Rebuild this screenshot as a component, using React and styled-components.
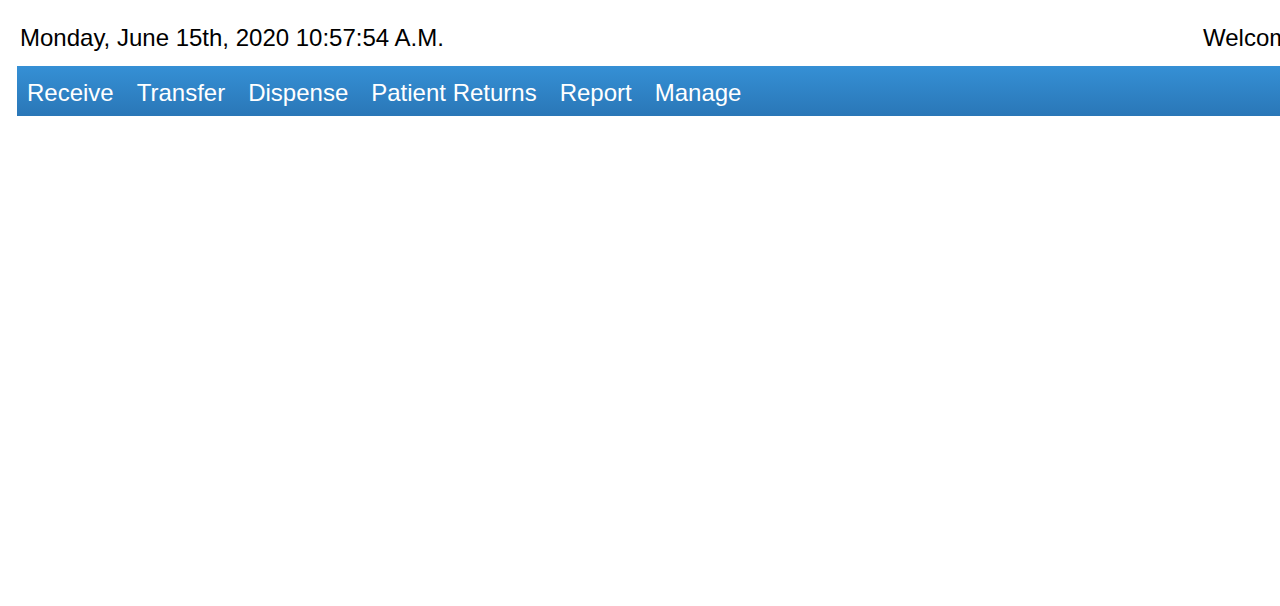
import React from 'react';
import styled, {createGlobalStyle} from 'styled-components';

const GlobalStyle = createGlobalStyle`
  html, body {
    margin: 0;
    padding: 0;
    overflow: hidden;
    background: #fff;
  }
  body {
    font-family: "Liberation Sans", Arial, sans-serif;
  }
`

const Page = styled.div`
  width: 1400px;
  padding-left: 17px;
`

const Header = styled.div`
  display: flex;
  justify-content: space-between;
  align-items: flex-start;
  padding: 24px 0 0 3px;
  height: 66px;
  box-sizing: border-box;
  font-size: 24px;
  color: #000;
`

const Clock = styled.div`
  white-space: nowrap;
`

const Welcome = styled.div`
  white-space: nowrap;
  width: 214px;
`

const NavBar = styled.nav`
  display: flex;
  gap: 7px;
  height: 50px;
  box-sizing: border-box;
  padding: 13px 0 0 2px;
  background: linear-gradient(to bottom, #3590d5 0%, #2a77b7 100%);
`

const NavItem = styled.a`
  padding: 0 8px;
  font-size: 24px;
  color: #fff;
  text-decoration: none;
  white-space: nowrap;
  cursor: pointer;
`

const menu = ['Receive', 'Transfer', 'Dispense', 'Patient Returns', 'Report', 'Manage'];

export default function App() {
  return (
    <Page>
      <GlobalStyle/>
      <Header>
        <Clock>Monday, June 15th, 2020 10:57:54 A.M.</Clock>
        <Welcome>Welcome, User</Welcome>
      </Header>
      <NavBar>
        {menu.map(item => <NavItem key={item}>{item}</NavItem>)}
      </NavBar>
    </Page>
  );
}
